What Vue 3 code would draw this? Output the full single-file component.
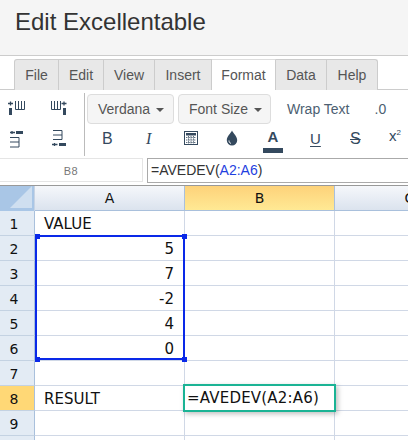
<script setup>
const tabs = ['File', 'Edit', 'View', 'Insert', 'Format', 'Data', 'Help']
const rows = [
  { n: 1, a: 'VALUE' },
  { n: 2, a: '5', num: true },
  { n: 3, a: '7', num: true },
  { n: 4, a: '-2', num: true },
  { n: 5, a: '4', num: true },
  { n: 6, a: '0', num: true },
  { n: 7, a: '' },
  { n: 8, a: 'RESULT', active: true },
  { n: 9, a: '' },
  { n: 10, a: '' }
]
</script>

<template>
  <div class="app">
    <header class="top"><h1>Edit Excellentable</h1></header>
    <nav class="tabs">
      <div v-for="t in tabs" :key="t" class="tab" :class="['tab-' + t.toLowerCase(), { on: t === 'Format' }]">{{ t }}</div>
    </nav>
    <section class="toolbar">
      <div class="iconcol">
        <svg width="24" height="20" viewBox="0 0 24 20" class="ic"><path d="M3 3.500h5M5.500 1.500v4" stroke="#34495e" stroke-width="1.300" fill="none"/><rect x="4" y="8" width="3" height="7" fill="#34495e"/><path d="M10.500 1v8.500h9V1M13.500 1v8.500M16.500 1v8.500" stroke="#34495e" fill="none"/></svg>
        <svg width="24" height="20" viewBox="0 0 24 20" class="ic"><path d="M14.500 3.500h5M17 1.500v4" stroke="#34495e" stroke-width="1.300" fill="none"/><rect x="16" y="8" width="3" height="7" fill="#34495e"/><path d="M4.500 1v8.500h9V1M7.500 1v8.500M10.500 1v8.500" stroke="#34495e" fill="none"/></svg>
        <svg width="24" height="20" viewBox="0 0 24 20" class="ic"><rect x="11" y="1" width="7" height="3" fill="#34495e"/><path d="M5 2.500h5M7 1v3" stroke="#34495e" stroke-width="1.300" fill="none"/><path d="M5 7.500h9V17H5M5 12h9" stroke="#34495e" fill="none"/></svg>
        <svg width="24" height="20" viewBox="0 0 24 20" class="ic"><rect x="12" y="13" width="7" height="3" fill="#34495e"/><path d="M5 14.500h5.500M7.500 13v3" stroke="#34495e" stroke-width="1.300" fill="none"/><path d="M6 .500h9V9.500H6M6 5h9" stroke="#34495e" fill="none"/></svg>
      </div>
      <div class="tools">
        <div class="line1">
          <div class="drop verdana">Verdana<i class="caret"></i></div>
          <div class="drop fsize">Font Size<i class="caret"></i></div>
          <span class="plain wrap">Wrap Text</span>
          <span class="plain dot">.0</span>
        </div>
        <div class="line2">
          <span class="t b">B</span>
          <span class="t it">I</span>
          <svg class="g" width="14" height="14" viewBox="0 0 14 14"><rect x=".5" y=".5" width="13" height="13" fill="none" stroke="#34495e"/><rect x="2" y="2" width="10" height="2.500" fill="#34495e"/><path d="M2 6.500h10M2 9h10M2 11.500h10M4.500 5v7.500M7 5v7.500M9.500 5v7.500" stroke="#34495e" stroke-width=".8" stroke-dasharray="1 .6" fill="none"/></svg>
          <svg class="drip" width="12" height="16" viewBox="0 0 12 16"><path d="M6 .5C4.500 3.500.8 6.500.8 10.200a5.200 5.200 0 0 0 10.400 0C11.200 6.500 7.500 3.500 6 .5Z" fill="#34495e"/><path d="M3 10.500c0 1.500.8 2.500 2 3" stroke="#fff" fill="none"/></svg>
          <span class="col"><span>A</span><i></i></span>
          <span class="t u">U</span>
          <span class="t s">S</span>
          <span class="t sup">x<small>2</small></span>
        </div>
      </div>
    </section>
    <section class="fbar">
      <div class="ref">B8</div>
      <div class="input">=AVEDEV(<span>A2:A6</span>)</div>
    </section>
    <section class="sheet">
      <div class="corner"><i></i></div>
      <div class="colh">A</div>
      <div class="colh active">B</div>
      <div class="colh">C</div>
      <template v-for="r in rows" :key="r.n">
        <div class="rowh" :class="{ active: r.active }">{{ r.n }}</div>
        <div class="cell" :class="{ num: r.num }">{{ r.a }}</div>
        <div class="cell"></div>
        <div class="cell"></div>
      </template>
      <div class="range"><i class="h1"></i><i class="h2"></i><i class="h3"></i><i class="h4"></i></div>
      <div class="editor">=AVEDEV(A2:A6)</div>
    </section>
  </div>
</template>

<style scoped>
.app { width: 408px; height: 440px; overflow: hidden; background: #fff; font-family: "Liberation Sans", Arial, sans-serif; position: relative; }
.top { box-sizing: border-box; background: #f5f5f5; border-bottom: 1px solid #ccc; height: 56px; padding: 7px 0 0 15px; }
h1 { margin: 0; font-size: 24px; font-weight: 400; line-height: 30px; color: #333; white-space: nowrap; }
.tabs { display: flex; height: 34px; box-sizing: border-box; padding: 3px 0 0 14px; border-bottom: 1px solid #ccc; }
.tab { box-sizing: border-box; height: 31px; padding-top: 7px; text-align: center; font-size: 14px; line-height: 16px; color: #555; background: #e8e8e8; border: 1px solid #ccc; border-left-width: 0; border-bottom: 0; }
.tab-file { width: 45px; border-left-width: 1px; border-radius: 3px 0 0 0; }
.tab-edit { width: 45px; }
.tab-view { width: 51px; }
.tab-insert { width: 57px; }
.tab-format { width: 64px; background: #fff; margin-bottom: -1px; position: relative; border-top-color: #ddd; }
.tab-data { width: 51px; }
.tab-help { width: 51px; border-radius: 0 3px 0 0; }
.toolbar { display: flex; height: 67px; box-sizing: border-box; padding-top: 3px; }
.iconcol { width: 85px; height: 63px; box-sizing: border-box; border-right: 1px solid #bbb; display: grid; grid-template-columns: 42px 42px; padding-top: 3px; grid-auto-rows: 30px; }
.ic { margin: 4px 0 0 5px; }
.tools { margin-left: 2px; }
.line1 { display: flex; align-items: center; height: 31px; }
.drop { box-sizing: border-box; height: 30px; background: #f5f5f5; border: 1px solid #ddd; border-radius: 4px; color: #555; font-size: 14px; line-height: 28px; padding-left: 10px; }
.verdana { width: 87px; }
.fsize { width: 93px; margin-left: 4px; }
.caret { display: inline-block; border-left: 4px solid transparent; border-right: 4px solid transparent; border-top: 4px solid #555; margin-left: 6px; vertical-align: 2px; }
.plain { color: #4d5f72; font-size: 14px; }
.wrap { margin-left: 16px; }
.dot { margin-left: 25px; }
.line2 { display: flex; align-items: center; height: 30px; position: relative; color: #34495e; }
.t { position: absolute; top: 5px; font-size: 16px; line-height: 20px; color: #34495e; }
.b { left: 15px; }
.it { left: 59px; font-family: "Liberation Serif", serif; font-style: italic; }
.u { left: 223px; font-size: 15px; text-decoration: underline; text-underline-offset: 2px; }
.s { left: 263px; font-size: 16px; text-decoration: line-through; }
.sup { left: 302px; font-size: 15px; top: 2px; }
.sup small { font-size: 8px; vertical-align: 6px; line-height: 0; }
.g { position: absolute; left: 97px; top: 7px; }
.drip { position: absolute; left: 139px; top: 6px; }
.col { position: absolute; left: 176px; top: 3px; width: 20px; text-align: center; font-size: 15px; font-weight: 700; line-height: 20px; color: #34495e; }
.col span { display: block; height: 20px; }
.col i { display: block; height: 5px; background: #34495e; margin-top: 1px; }
.fbar { display: flex; height: 28px; box-sizing: border-box; padding-top: 1px; }
.ref { width: 143px; height: 24px; box-sizing: border-box; border: 1px solid #e5e5e5; border-left: 0; text-align: center; font-size: 11px; line-height: 24px; color: #777; letter-spacing: .5px; }
.input { flex: 1; margin-left: 4px; height: 25px; box-sizing: border-box; border: 1px solid #aaa; border-right: 0; padding-left: 3px; font-size: 14px; line-height: 23px; color: #333; }
.input span { color: #1f3fe0; }
.sheet { display: grid; grid-template-columns: 35px 150px 150px 150px; grid-template-rows: 25px repeat(10, 25px); position: relative; width: 485px; font-family: "DejaVu Sans", Verdana, sans-serif; color: #111; border-top: 1px solid #999; }
.corner { background: #a9c6e6; position: relative; box-sizing: border-box; border-right: 1px solid #c8d4e4; overflow: hidden; }
.corner i { position: absolute; right: 2px; bottom: 3px; border-left: 22px solid transparent; border-bottom: 22px solid #cfdff0; }
.colh { box-sizing: border-box; border-right: 1px solid #a9c0dc; border-bottom: 1px solid #a9c0dc; background: linear-gradient(#f5f7fb, #dbe3ee); text-align: center; font-size: 14px; line-height: 25px; }
.colh.active { background: linear-gradient(#fdd27a, #ffe994); }
.rowh { box-sizing: border-box; background: #e3ebf4; border-right: 1px solid #a9c0dc; border-bottom: 1px solid #c4d2e2; text-align: center; font-size: 14px; line-height: 26px; padding-right: 6px; }
.rowh.active { background: #ffd876; }
.cell { box-sizing: border-box; border-right: 1px solid #d0d8e6; border-bottom: 1px solid #d0d8e6; font-size: 15px; line-height: 26px; padding-left: 9px; white-space: nowrap; overflow: hidden; }
.cell.num { text-align: right; padding-right: 10px; }
.range { position: absolute; left: 35px; top: 49px; width: 150px; height: 125px; box-sizing: border-box; border: 2px solid #0a29e8; }
.range i { position: absolute; width: 5px; height: 5px; background: #0a29e8; }
.h1 { left: -2px; top: -3px; }
.h2 { right: -4px; top: -3px; }
.h3 { left: -2px; bottom: -4px; }
.h4 { right: -4px; bottom: -4px; }
.editor { position: absolute; left: 183px; top: 198px; width: 153px; height: 28px; box-sizing: border-box; border: 2px solid #1ab394; background: #fff; box-shadow: 2px 2px 5px rgba(0,0,0,.25); padding-left: 2px; font-size: 15px; letter-spacing: .2px; line-height: 24px; white-space: nowrap; }
</style>
